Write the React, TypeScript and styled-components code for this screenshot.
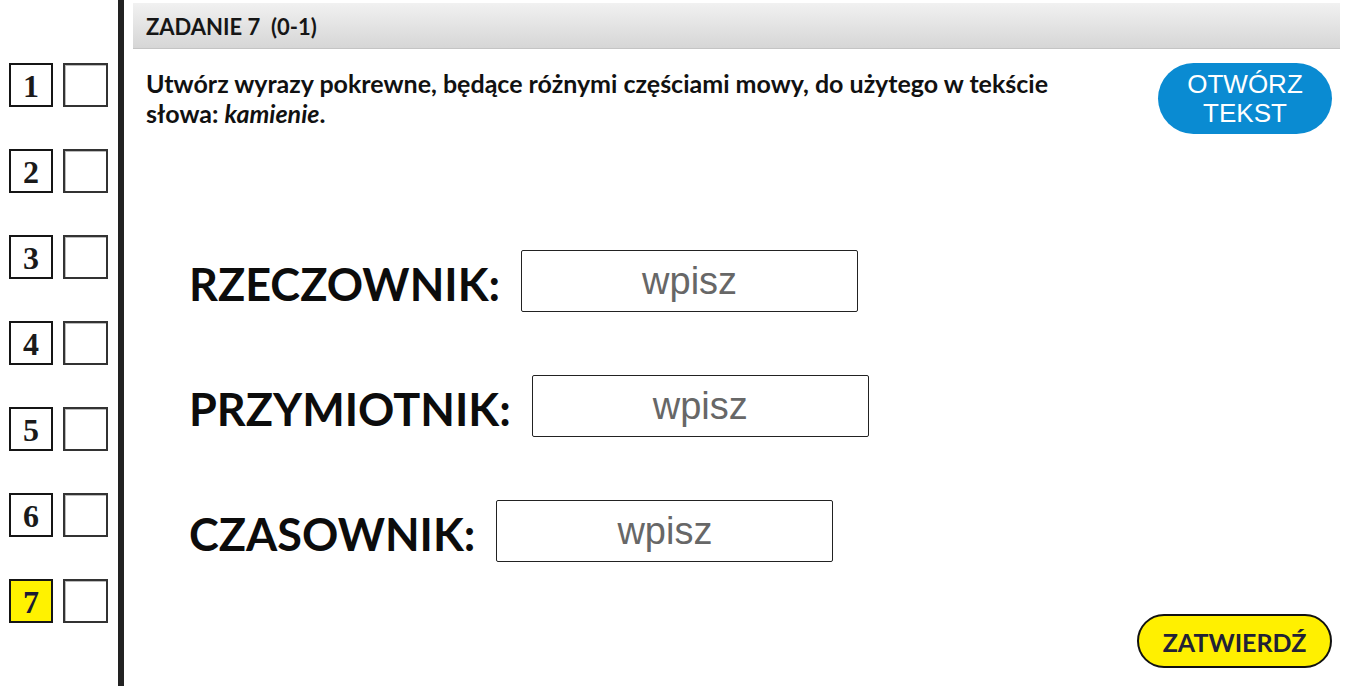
import React, { useState } from "react";
import styled, { createGlobalStyle } from "styled-components";

const GlobalStyle = createGlobalStyle`
  html, body {
    margin: 0;
    padding: 0;
    background: #ffffff;
    font-family: Lato, "Liberation Sans", sans-serif;
  }
`;

const Page = styled.div`
  display: flex;
  width: 1348px;
  height: 686px;
  overflow: hidden;
`;

const Sidebar = styled.nav`
  width: 124px;
  flex-shrink: 0;
  border-right: 6px solid #222;
  display: flex;
  flex-direction: column;
  gap: 42px;
  padding-top: 63px;
  box-sizing: border-box;
`;

const NavRow = styled.div`
  display: flex;
  gap: 10px;
  padding-left: 9px;
`;

const NumBox = styled.div<{ $active?: boolean }>`
  width: 44px;
  height: 44px;
  box-sizing: border-box;
  border: 2px solid #151515;
  background: ${(p) => (p.$active ? "#fff200" : "#fff")};
  color: ${(p) => (p.$active ? "#1b1a33" : "#1a1a1a")};
  display: flex;
  align-items: center;
  justify-content: center;
  font-family: "Liberation Serif", serif;
  font-weight: bold;
  font-size: 32px;
  padding-top: 3px;
`;

const CheckBox = styled.div`
  width: 45px;
  height: 44px;
  box-sizing: border-box;
  border: 2px solid #333;
  box-shadow: inset 1px 1px 0 #bbb;
  background: #fff;
`;

const Main = styled.main`
  flex: 1;
  display: flex;
  flex-direction: column;
  padding: 3px 8px 0 9px;
  position: relative;
`;

const Header = styled.div`
  height: 46px;
  box-sizing: border-box;
  background: linear-gradient(to bottom, #f1f1f1, #d6d6d6);
  border-bottom: 1px solid #c4c4c4;
  display: flex;
  align-items: center;
  padding-left: 13px;
  padding-top: 2px;
  font-size: 22px;
  font-weight: bold;
  color: #161616;
  white-space: pre;
`;

const TaskBar = styled.div`
  display: flex;
  justify-content: space-between;
  align-items: flex-start;
  padding: 14px 8px 0 13px;
`;

const Question = styled.p`
  margin: 5px 0 0;
  width: 960px;
  font-size: 25px;
  line-height: 30px;
  font-weight: bold;
  color: #111;
  em {
    font-style: italic;
  }
`;

const OpenButton = styled.button`
  width: 174px;
  height: 71px;
  border: none;
  border-radius: 36px;
  background: #0a8bd2;
  color: #fff;
  font-family: "Liberation Sans", Arial, sans-serif;
  font-size: 26px;
  line-height: 29px;
  padding: 0;
  cursor: pointer;
`;

const Form = styled.div`
  display: flex;
  flex-direction: column;
  gap: 63px;
  padding: 116px 0 0 56px;
`;

const Row = styled.label`
  display: flex;
  align-items: center;
  gap: 21px;
`;

const Label = styled.span`
  font-size: 45px;
  font-weight: bold;
  color: #0c0c0c;
  padding-top: 6px;
`;

const Field = styled.input`
  width: 337px;
  height: 62px;
  box-sizing: border-box;
  border: 1px solid #222;
  border-radius: 2px;
  text-align: center;
  font-family: "Liberation Sans", Arial, sans-serif;
  font-size: 38px;
  color: #333;
  background: #fff;
  outline: none;
  &::placeholder {
    color: #676767;
  }
`;

const SubmitButton = styled.button`
  position: absolute;
  right: 16px;
  bottom: 18px;
  width: 195px;
  height: 54px;
  border: 2px solid #111;
  border-radius: 28px;
  background: #fff000;
  color: #222235;
  font-family: Lato, sans-serif;
  font-weight: bold;
  font-size: 25px;
  padding: 2px 0 0;
  cursor: pointer;
`;

const fields = ["RZECZOWNIK:", "PRZYMIOTNIK:", "CZASOWNIK:"];

export default function App() {
  const [values, setValues] = useState<string[]>(["", "", ""]);

  return (
    <Page>
      <GlobalStyle />
      <Sidebar>
        {[1, 2, 3, 4, 5, 6, 7].map((n) => (
          <NavRow key={n}>
            <NumBox $active={n === 7}>{n}</NumBox>
            <CheckBox />
          </NavRow>
        ))}
      </Sidebar>
      <Main>
        <Header>ZADANIE 7  (0-1)</Header>
        <TaskBar>
          <Question>
            Utwórz wyrazy pokrewne, będące różnymi częściami mowy, do użytego w tekście
            słowa: <em>kamienie</em>.
          </Question>
          <OpenButton>
            OTWÓRZ
            <br />
            TEKST
          </OpenButton>
        </TaskBar>
        <Form>
          {fields.map((f, i) => (
            <Row key={f}>
              <Label>{f}</Label>
              <Field
                placeholder="wpisz"
                value={values[i]}
                onChange={(e) => {
                  const next = [...values];
                  next[i] = e.target.value;
                  setValues(next);
                }}
              />
            </Row>
          ))}
        </Form>
        <SubmitButton>ZATWIERDŹ</SubmitButton>
      </Main>
    </Page>
  );
}
